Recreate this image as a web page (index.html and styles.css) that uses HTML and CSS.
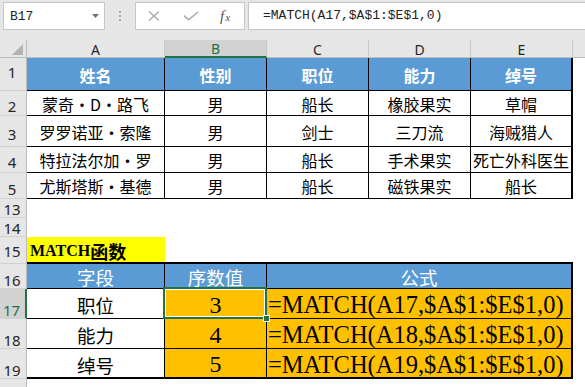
FILE: index.html
```html
<!DOCTYPE html>
<html lang="zh-CN">
<head>
<meta charset="utf-8">
<title>MATCH</title>
<link rel="stylesheet" href="styles.css">
</head>
<body>
<div class="app">
  <div class="toolbar">
    <div class="namebox"><span>B17</span><svg class="dd" width="7" height="4" viewBox="0 0 7 4"><path d="M0 0H7L3.5 4Z" fill="#707070"/></svg></div>
    <div class="grip"><i></i><i></i><i></i></div>
    <div class="fxbox">
      <svg class="ic-x" width="12" height="10" viewBox="0 0 12 10"><path d="M1 0.5L11 9.5M11 0.5L1 9.5" stroke="#a8a8a8" stroke-width="1.3" fill="none"/></svg>
      <svg class="ic-ok" width="16" height="10" viewBox="0 0 16 10"><path d="M1 4.5L5.5 8.8L15 1" stroke="#a8a8a8" stroke-width="1.5" fill="none"/></svg>
      <span class="fx"><i>f</i><i class="fxx">x</i></span>
    </div>
    <div class="input">=MATCH(A17,$A$1:$E$1,0)</div>
  </div>

  <div class="sheet">
    <div class="corner"><svg width="26" height="17" viewBox="0 0 26 17"><path d="M23 4V15H12Z" fill="#b4b4b4"/></svg></div>
    <div class="ch">A</div>
    <div class="ch sel">B</div>
    <div class="ch">C</div>
    <div class="ch">D</div>
    <div class="ch">E</div>
    <div class="ch"></div>

    <div class="rh r1">1</div>
    <div class="c hd">姓名</div>
    <div class="c hd">性别</div>
    <div class="c hd">职位</div>
    <div class="c hd">能力</div>
    <div class="c hd e">绰号</div>
    <div class="f"></div>

    <div class="rh">2</div>
    <div class="c">蒙奇·D·路飞</div>
    <div class="c">男</div>
    <div class="c">船长</div>
    <div class="c">橡胶果实</div>
    <div class="c e">草帽</div>
    <div class="f"></div>

    <div class="rh r3">3</div>
    <div class="c">罗罗诺亚·索隆</div>
    <div class="c">男</div>
    <div class="c">剑士</div>
    <div class="c">三刀流</div>
    <div class="c e">海贼猎人</div>
    <div class="f"></div>

    <div class="rh r4">4</div>
    <div class="c">特拉法尔加·罗</div>
    <div class="c">男</div>
    <div class="c">船长</div>
    <div class="c">手术果实</div>
    <div class="c e">死亡外科医生</div>
    <div class="f"></div>

    <div class="rh">5</div>
    <div class="c">尤斯塔斯·基德</div>
    <div class="c">男</div>
    <div class="c">船长</div>
    <div class="c">磁铁果实</div>
    <div class="c e">船长</div>
    <div class="f"></div>

    <div class="rh r0">13</div>
    <div class="blank"></div>

    <div class="rh r0">14</div>
    <div class="blank"></div>

    <div class="rh r15">15</div>
    <div class="title">MATCH<span class="tcjk">函数</span></div>
    <div class="tline"></div>
    <div class="f"></div>

    <div class="rh r0">16</div>
    <div class="c h2">字段</div>
    <div class="c h2">序数值</div>
    <div class="c h2 m">公式</div>
    <div class="f"></div>

    <div class="rh r0 sel">17</div>
    <div class="c w">职位</div>
    <div class="c o num">3<div class="selbox"><i class="handle"></i></div></div>
    <div class="c o m fm">=MATCH(A17,$A$1:$E$1,0)</div>
    <div class="f"></div>

    <div class="rh r0">18</div>
    <div class="c w">能力</div>
    <div class="c o num">4</div>
    <div class="c o m fm">=MATCH(A18,$A$1:$E$1,0)</div>
    <div class="f"></div>

    <div class="rh r0">19</div>
    <div class="c w bot">绰号</div>
    <div class="c o num bot">5</div>
    <div class="c o m fm bot">=MATCH(A19,$A$1:$E$1,0)</div>
    <div class="f"></div>

    <div class="rh r20">20</div>
    <div class="blank"></div>
  </div>
</div>
</body>
</html>
```

FILE: styles.css
```css
* { box-sizing: border-box; }
body { margin: 0; background: #fff; }

.app {
  width: 585px;
  height: 387px;
  overflow: hidden;
  position: relative;
  font-family: "Noto Sans CJK SC", sans-serif;
  color: #000;
}

/* ---------- formula bar ---------- */
.toolbar {
  height: 40px;
  background: #e6e6e6;
  display: flex;
  align-items: flex-start;
  padding: 2px 0 0 3px;
}
.namebox {
  flex: none;
  width: 102px;
  height: 28px;
  border: 1px solid #c6c6c6;
  background: #fff;
  display: flex;
  align-items: center;
  justify-content: space-between;
  padding: 0 5px 0 6px;
  font: 13px "Liberation Mono", monospace;
  color: #222;
}
.dd { display: block; }
.grip {
  flex: none;
  width: 30px;
  height: 28px;
  display: flex;
  flex-direction: column;
  align-items: center;
  justify-content: center;
  gap: 2px;
}
.grip i { display: block; width: 2px; height: 2px; background: #a6a6a6; }
.fxbox {
  flex: none;
  width: 110px;
  height: 28px;
  border: 1px solid #c6c6c6;
  background: #fff;
  display: flex;
  align-items: center;
  padding-left: 12px;
}
.ic-x, .ic-ok { display: block; flex: none; }
.ic-ok { margin-left: 23px; }
.fx {
  margin-left: 21px;
  font-family: "Liberation Serif", serif;
  color: #555;
  font-size: 15px;
  line-height: 1;
  display: flex;
  align-items: baseline;
}
.fx i { font-style: italic; }
.fxx { font-size: 11px; margin-left: 1px; }
.input {
  flex: 1;
  margin-left: 3px;
  height: 28px;
  border: 1px solid #c6c6c6;
  border-right: none;
  background: #fff;
  padding-left: 14px;
  font: 13px/26px "Liberation Mono", monospace;
  color: #222;
  white-space: nowrap;
}

/* ---------- sheet grid ---------- */
.sheet {
  display: grid;
  grid-template-columns: 27px 138px 102px 102px 102px 102px 80px;
  grid-template-rows: 18px 33px 25px 31px 26px 26px 19px 19px 27px 25px 30px 30px 30px 30px;
}
.corner {
  background: #e6e6e6;
  border-right: 1px solid #bcbcbc;
  border-bottom: 1px solid #bcbcbc;
}
.corner svg { display: block; }
.ch {
  background: #e6e6e6;
  border-right: 1px solid #c8c8c8;
  border-bottom: 1px solid #bcbcbc;
  display: flex;
  align-items: flex-end;
  justify-content: center;
  font: 14px/1 "Noto Sans", sans-serif;
  color: #262626;
}
.ch.sel {
  background: #d2d2d2;
  color: #217346;
  border-bottom: 2px solid #217346;
}
.rh {
  background: #e6e6e6;
  border-right: 1px solid #bcbcbc;
  border-bottom: 1px solid #d0d0d0;
  display: flex;
  align-items: flex-end;
  justify-content: center;
  padding-right: 2px;
  padding-bottom: 1px;
  font: 15px/1 "Noto Sans", sans-serif;
  color: #262626;
}
.rh.r0 { padding-bottom: 0; }
.rh.r1 { padding-bottom: 10px; }
.rh.r3 { padding-bottom: 4px; }
.rh.r4 { padding-bottom: 2px; }
.rh.r15 { padding-bottom: 4px; }
.rh.r20 { align-items: flex-start; padding-top: 6px; }
.rh.sel {
  background: #d2d2d2;
  color: #217346;
  border-right: 2px solid #217346;
}

.c {
  display: flex;
  align-items: center;
  justify-content: center;
  border-right: 1px solid #000;
  border-bottom: 1px solid #000;
  font-size: 16px;
  white-space: nowrap;
  padding-top: 1px;
}
.c.e { border-right-width: 2px; }
.c.hd { background: #5b9bd5; color: #fff; font-weight: 700; }
.f { background: #fff; }
.blank { grid-column: 2 / -1; background: #fff; }

.title {
  background: #ffff00;
  border-bottom: 2px solid #000;
  display: flex;
  align-items: center;
  padding: 3px 0 0 3px;
  font: 700 16px "Liberation Serif", serif;
  white-space: nowrap;
}
.tcjk { font-family: "Noto Sans CJK SC", sans-serif; font-size: 18px; font-weight: 700; }
.tline { grid-column: 3 / 7; border-bottom: 2px solid #000; }

.c.h2 { background: #5b9bd5; color: #fff; font-size: 18.5px; }
.c.m { grid-column: 4 / 7; border-right-width: 2px; }
.c.w { background: #fff; font-size: 18.5px; padding-top: 3px; }
.c.o { background: #ffc000; }
.c.num {
  position: relative;
  font: 24px "Liberation Serif", serif;
  padding-top: 3px;
}
.c.fm {
  justify-content: flex-start;
  padding-left: 1px;
  padding-top: 3px;
  overflow: hidden;
  font: 24.5px "Liberation Serif", serif;
}
.c.bot { border-bottom-width: 2px; }

.selbox {
  position: absolute;
  left: -2px;
  top: -2px;
  right: -1px;
  bottom: -1px;
  border: 2px solid #217346;
  box-shadow: inset 0 0 0 1px #fff;
  z-index: 2;
}
.handle {
  position: absolute;
  right: -5px;
  bottom: -5px;
  width: 7px;
  height: 7px;
  background: #217346;
  border: 1px solid #fff;
}
```
